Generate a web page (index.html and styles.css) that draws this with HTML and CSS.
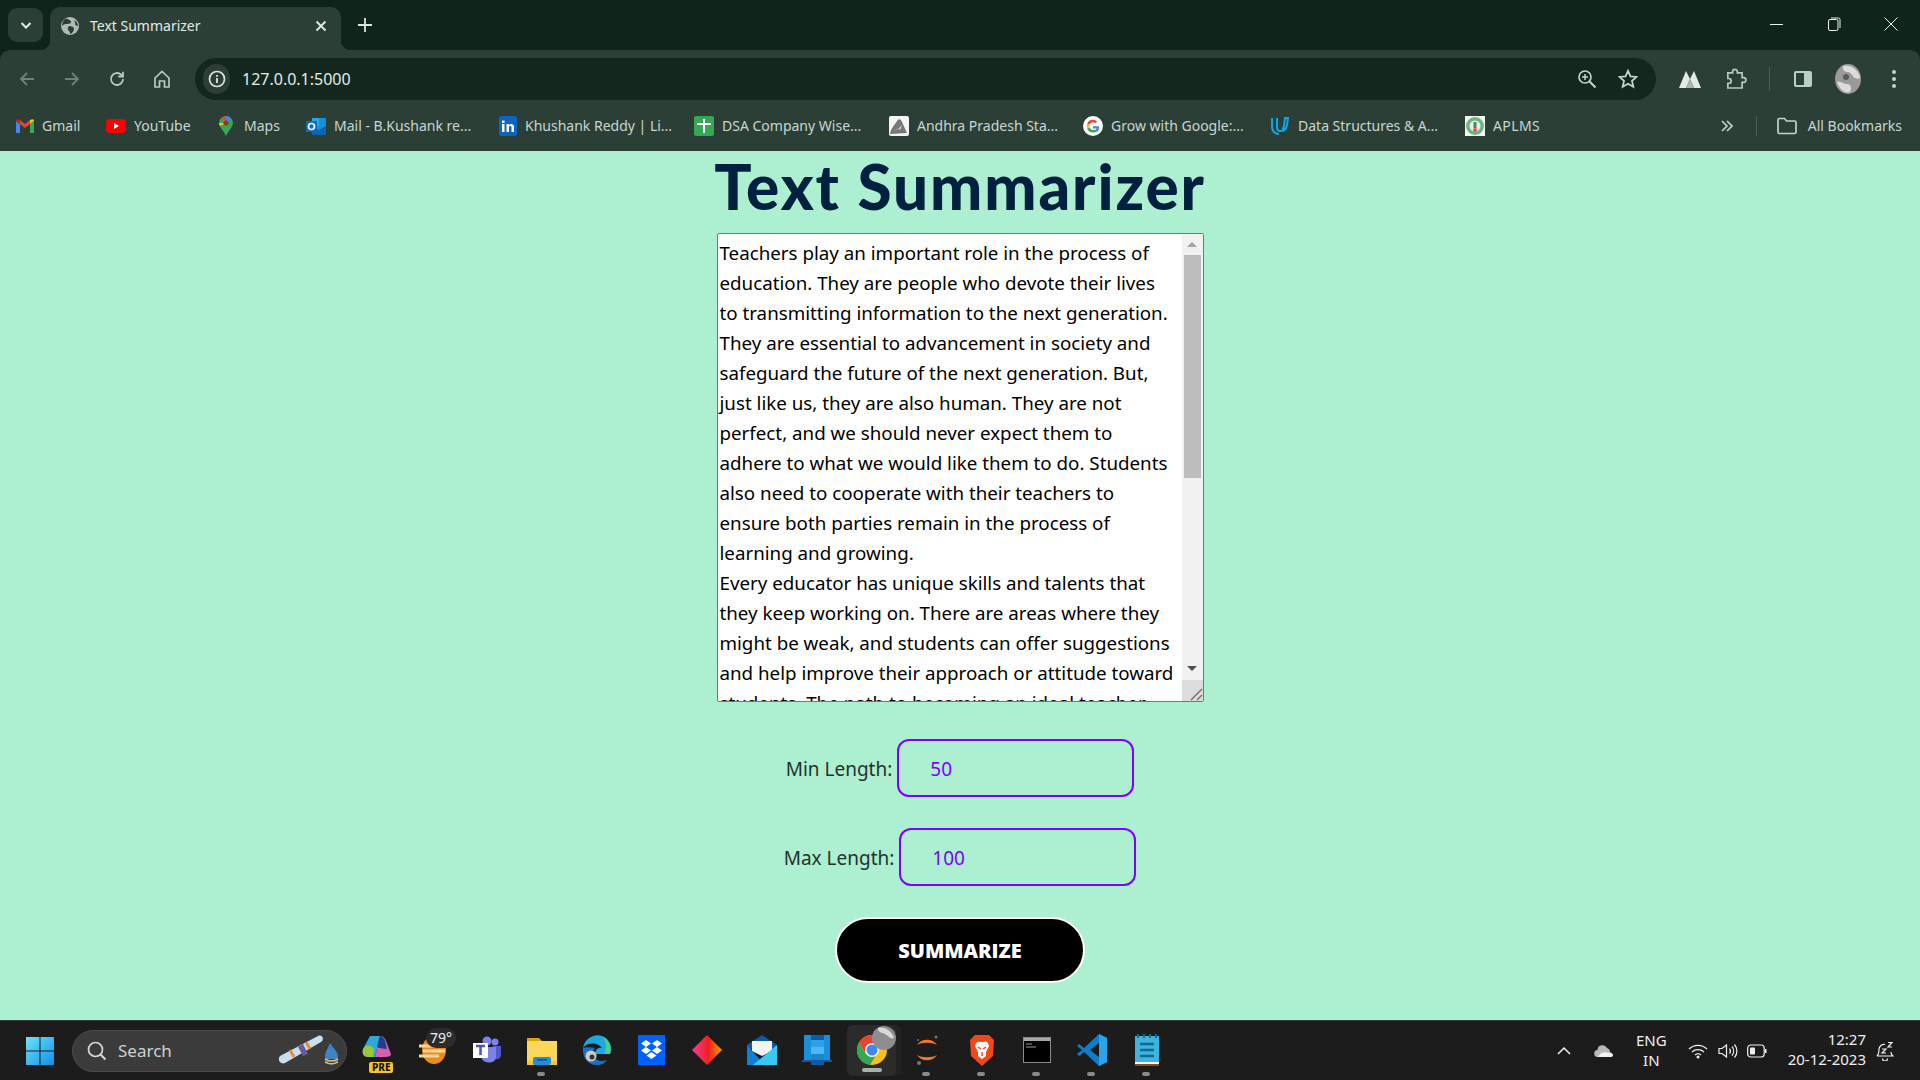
FILE: index.html
```html
<!DOCTYPE html>
<html lang="en">
<head>
  <meta charset="UTF-8" />
  <title>Text Summarizer</title>
  <link rel="stylesheet" href="styles.css">
</head>
<body>
  <div class="screen">

    <!-- tab strip -->
    <div class="tabstrip">
      <div class="tabsearch">
        <svg width="14" height="14" viewBox="0 0 14 14"><path d="M2.5 5l4.5 4.5L11.5 5" fill="none" stroke="#e4ebe7" stroke-width="2"/></svg>
      </div>
      <div class="tab">
        <svg class="tab-globe" width="18" height="18" viewBox="0 0 18 18"><circle cx="9" cy="9" r="9" fill="#aebcb5"/><path d="M5 1.5c2 1 4 1 5 3S7 7 5 7 1.500 8 1 9.500C1 5 3 2.500 5 1.500zM8 9c3 0 5 1 5 3s-2 4-3 5c-1 0-1-2-2-3s-2-3 0-5zM13 3c2 1 4 3 4 6-2 0-3-1-3-3s-1-2-1-3z" fill="#2c3f37"/></svg>
        <span class="tab-title">Text Summarizer</span>
        <svg class="tab-close" width="12" height="12" viewBox="0 0 12 12"><path d="M1.500 1.500l9 9M10.500 1.500l-9 9" stroke="#e4ebe7" stroke-width="1.800"/></svg>
      </div>
      <svg class="newtab" width="14" height="14" viewBox="0 0 14 14"><path d="M7 0v14M0 7h14" stroke="#dfe6e2" stroke-width="1.800"/></svg>
      <div class="winbtns">
        <svg width="14" height="14" viewBox="0 0 14 14"><path d="M0 7.500h13" stroke="#f0f0f0"/></svg>
        <svg width="14" height="14" viewBox="0 0 14 14"><rect x="1.500" y="2.500" width="9.500" height="11" rx="1.500" fill="none" stroke="#f0f0f0"/><path d="M4 1h7.500a1.500 1.500 0 0 1 1.500 1.500V11" fill="none" stroke="#f0f0f0"/></svg>
        <svg width="14" height="14" viewBox="0 0 14 14"><path d="M.5.5l13 13M13.500.5l-13 13" stroke="#f0f0f0"/></svg>
      </div>
    </div>

    <!-- toolbar -->
    <div class="toolbar">
      <div class="navbtns">
        <svg width="18" height="18" viewBox="0 0 18 18"><path d="M16 9H3M9 3L3 9l6 6" fill="none" stroke="#6f817a" stroke-width="1.800"/></svg>
        <svg width="18" height="18" viewBox="0 0 18 18"><path d="M2 9h13M9 3l6 6-6 6" fill="none" stroke="#6f817a" stroke-width="1.800"/></svg>
        <svg width="18" height="18" viewBox="0 0 18 18"><path d="M15 9a6 6 0 1 1-1.800-4.300L15 6.500M15 1.800v4.700h-4.700" fill="none" stroke="#b9c8c1" stroke-width="1.800"/></svg>
        <svg width="18" height="18" viewBox="0 0 18 18"><path d="M2 8l7-6.500L16 8v9h-4.500v-6h-5v6H2z" fill="none" stroke="#b9c8c1" stroke-width="1.700"/></svg>
      </div>
      <div class="omnibox">
        <div class="site-chip">
          <svg width="18" height="18" viewBox="0 0 18 18"><circle cx="9" cy="9" r="7.500" fill="none" stroke="#dfe6e2" stroke-width="1.700"/><path d="M9 8v5M9 5v1.800" stroke="#dfe6e2" stroke-width="1.800"/></svg>
        </div>
        <span class="url">127.0.0.1:5000</span>
        <div class="omni-icons">
          <svg width="20" height="20" viewBox="0 0 20 20"><circle cx="8" cy="8" r="6" fill="none" stroke="#c4d2cb" stroke-width="1.700"/><path d="M12.500 12.500L18.500 18.500" stroke="#c4d2cb" stroke-width="1.900"/><path d="M8 5v6M5 8h6" stroke="#c4d2cb" stroke-width="1.500"/></svg>
          <svg width="20" height="20" viewBox="0 0 20 20"><path d="M10 1.800l2.500 5.500 6 .6-4.500 4 1.300 5.900L10 14.800l-5.300 3 1.300-5.900-4.500-4 6-.6z" fill="none" stroke="#c4d2cb" stroke-width="1.800"/></svg>
        </div>
      </div>
      <div class="ext-icons">
        <svg class="ext-drive" width="22" height="20" viewBox="0 0 22 20"><path d="M0 19L7 2l4 8-4 9z" fill="#e4e9e6"/><path d="M22 19L15 2l-4 8 4 9z" fill="#e4e9e6"/><path d="M7 19l4-9 4 9z" fill="#aab6b0"/></svg>
        <svg class="ext-puzzle" width="22" height="22" viewBox="0 0 22 22"><path d="M3 4h5V3a2.500 2.500 0 0 1 5 0v1h5v5h1.500a2.500 2.500 0 0 1 0 5H18v6H3v-5h1a2.500 2.500 0 0 0 0-5H3z" fill="none" stroke="#b9c8c1" stroke-width="1.800" transform="translate(0 1) scale(.95)"/></svg>
        <span class="ext-sep"></span>
        <svg class="ext-panel" width="20" height="20" viewBox="0 0 20 20"><rect x="1" y="2" width="18" height="16" rx="2" fill="#b9d0c6"/><rect x="3" y="4" width="8" height="12" fill="#2c3f37"/></svg>
        <svg class="ext-avatar" width="26" height="30" viewBox="0 0 26 30"><ellipse cx="13" cy="15" rx="13" ry="15" fill="#9a9a9a"/><path d="M8 2c5-2 14 2 17 10 0 4-3 3-5 2s-4-6-7-6-6-2-5-6zM2 18c3-2 6 2 10 2s5 4 3 8c-6 2-11-4-13-10z" fill="#dcdcdc"/><circle cx="11" cy="13" r="3" fill="#5c5c5c"/></svg>
        <svg class="ext-dots" width="6" height="20" viewBox="0 0 6 20"><circle cx="3" cy="3" r="2" fill="#c4d2cb"/><circle cx="3" cy="10" r="2" fill="#c4d2cb"/><circle cx="3" cy="17" r="2" fill="#c4d2cb"/></svg>
      </div>
    </div>

    <!-- bookmarks bar -->
    <div class="bookmarks">
      <a class="bm bm-gmail"><svg width="18" height="14" viewBox="0 0 18 14"><path d="M0 2v12h4V5z" fill="#4285f4"/><path d="M18 2v12h-4V5z" fill="#34a853"/><path d="M4 5l5 4 5-4V1l-5 4-5-4z" fill="#ea4335"/><path d="M0 2l4 3V1C2 0 0 0 0 2z" fill="#c5221f"/><path d="M18 2l-4 3V1c2-1 4-1 4 1z" fill="#fbbc04"/></svg>Gmail</a>
      <a class="bm bm-yt"><svg width="20" height="14" viewBox="0 0 20 14"><rect width="20" height="14" rx="4" fill="#f00"/><path d="M8 4l5 3-5 3z" fill="#fff"/></svg>YouTube</a>
      <a class="bm bm-maps"><svg width="14" height="20" viewBox="0 0 14 20"><path d="M7 0a7 7 0 0 1 7 7c0 4-5 8-7 13-2-5-7-9-7-13a7 7 0 0 1 7-7z" fill="#34a853"/><path d="M2 2.500A7 7 0 0 1 7 0v7z" fill="#ea4335"/><path d="M7 0a7 7 0 0 1 5 2.500L7 7z" fill="#4285f4"/><path d="M0 7c0 1 .3 2 1 3l6-3z" fill="#fbbc04"/><circle cx="7" cy="7" r="2.500" fill="#8f3a1f"/></svg>Maps</a>
      <a class="bm bm-mail"><svg width="20" height="20" viewBox="0 0 20 20"><rect x="6" y="2" width="14" height="16" fill="#1490df"/><rect x="6" y="2" width="7" height="8" fill="#28a8ea"/><path d="M6 11l7 3 7-4v9H6z" fill="#0a64b4"/><rect y="5" width="11" height="11" fill="#0f6cbd"/><circle cx="5.500" cy="10.500" r="3" fill="none" stroke="#fff" stroke-width="1.600"/></svg>Mail - B.Kushank re...</a>
      <a class="bm bm-li"><svg width="18" height="20" viewBox="0 0 18 20"><rect width="18" height="20" rx="2" y="0" fill="#0a66c2"/><path d="M3 8h2.500v8H3zM3 4.500h2.500V7H3zM7.500 8H10v1.200c1.500-2 5-1.700 5 2V16h-2.500v-4.500c0-2-2.500-1.800-2.500 0V16H7.500z" fill="#fff"/></svg>Khushank Reddy | Li...</a>
      <a class="bm bm-dsa"><svg width="20" height="20" viewBox="0 0 20 20"><rect width="20" height="20" rx="2" fill="#34a853"/><path d="M10 3v14M3 8h14" stroke="#fff" stroke-width="2"/></svg>DSA Company Wise...</a>
      <a class="bm bm-ap"><svg width="20" height="20" viewBox="0 0 20 20"><rect width="20" height="20" rx="2" fill="#f4f4f4"/><path d="M1 18c1-6 4-8 7-13 2-3 4-2 5 1l5 11z" fill="#777"/><path d="M5 15c3-1 6-3 8-6l-2 5-1-2z" fill="#f4f4f4"/></svg>Andhra Pradesh Sta...</a>
      <a class="bm bm-g"><svg width="20" height="20" viewBox="0 0 20 20"><circle cx="10" cy="10" r="10" fill="#fff"/><path d="M16 10.200H10v2.200h3.600a3.800 3.800 0 0 1-1.400 2l2 1.600a6.300 6.300 0 0 0 1.800-5.800z" fill="#4285f4"/><path d="M10 16.500a6.200 6.200 0 0 0 4.200-1.500l-2-1.600A3.800 3.800 0 0 1 6.400 11.300L4.300 12.900A6.400 6.400 0 0 0 10 16.500z" fill="#34a853"/><path d="M6.400 11.300a3.800 3.800 0 0 1 0-2.500L4.300 7.200a6.400 6.400 0 0 0 0 5.700z" fill="#fbbc04"/><path d="M10 6.200a3.500 3.500 0 0 1 2.400 1l1.800-1.800A6.300 6.300 0 0 0 4.300 7.200l2.100 1.600A3.800 3.800 0 0 1 10 6.200z" fill="#ea4335"/></svg>Grow with Google:...</a>
      <a class="bm bm-ds"><svg width="20" height="20" viewBox="0 0 20 20"><path d="M2 2v9c0 4 3 7 7 7M7 2v9c0 2 1 4 3 4 4 0 6-1 7-6l1-7h-3l-1 8c-.3 2-1 3-2 3" fill="none" stroke="#12a5e0" stroke-width="2"/></svg>Data Structures &amp; A...</a>
      <a class="bm bm-aplms"><svg width="20" height="20" viewBox="0 0 20 20"><rect width="20" height="20" fill="#f4f6f4"/><circle cx="10" cy="10" r="9" fill="#6db383"/><circle cx="10" cy="10" r="5.500" fill="#e8efe4"/><path d="M10 6v6" stroke="#3d8b5a" stroke-width="3"/><circle cx="10" cy="14" r="2" fill="#e1554f"/></svg>APLMS</a>
      <div class="bm-right">
        <svg width="12" height="12" viewBox="0 0 12 12"><path d="M1 1l5 5-5 5M6 1l5 5-5 5" fill="none" stroke="#c4d2cb" stroke-width="1.700"/></svg>
        <span class="bm-sep"></span>
        <a class="bm bm-all"><svg width="20" height="18" viewBox="0 0 20 18"><path d="M1 3a1.500 1.500 0 0 1 1.500-1.500h5l2 2.500h8A1.500 1.500 0 0 1 19 5.500V15a1.500 1.500 0 0 1-1.500 1.500h-15A1.500 1.500 0 0 1 1 15z" fill="none" stroke="#c4d2cb" stroke-width="1.700"/></svg>All Bookmarks</a>
      </div>
    </div>

    <!-- the page itself -->
    <main class="page">
      <h1>Text Summarizer</h1>

      <div class="textbox">
        <div class="textbox-text">
          <div>Teachers play an important role in the process of</div>
          <div>education. They are people who devote their lives</div>
          <div>to transmitting information to the next generation.</div>
          <div>They are essential to advancement in society and</div>
          <div>safeguard the future of the next generation. But,</div>
          <div>just like us, they are also human. They are not</div>
          <div>perfect, and we should never expect them to</div>
          <div>adhere to what we would like them to do. Students</div>
          <div>also need to cooperate with their teachers to</div>
          <div>ensure both parties remain in the process of</div>
          <div>learning and growing.</div>
          <div>Every educator has unique skills and talents that</div>
          <div>they keep working on. There are areas where they</div>
          <div>might be weak, and students can offer suggestions</div>
          <div>and help improve their approach or attitude toward</div>
          <div>students. The path to becoming an ideal teacher</div>
        </div>
        <div class="scrollbar">
          <div class="scroll-arrow arrow-box-up"><span class="arrow-up"></span></div>
          <div class="scroll-track"><div class="scroll-thumb"></div></div>
          <div class="scroll-arrow arrow-box-down"><span class="arrow-down"></span></div>
          <div class="resizer">
            <svg width="14" height="14" viewBox="0 0 14 14"><path d="M2 13L13 2M8 13l5-5" stroke="#666" stroke-width="1.200"/></svg>
          </div>
        </div>
      </div>

      <div class="field field-min">
        <label for="minLength">Min Length:</label>
        <input id="minLength" type="text" value="50" />
      </div>
      <div class="field field-max">
        <label for="maxLength">Max Length:</label>
        <input id="maxLength" type="text" value="100" />
      </div>

      <button class="summarize" type="button">SUMMARIZE</button>
    </main>

    <!-- windows taskbar -->
    <footer class="taskbar">
      <div class="tb-start">
        <svg width="30" height="30" viewBox="0 0 30 30"><defs><linearGradient id="winGrad" x1="0" y1="0" x2="1" y2="1"><stop offset="0" stop-color="#6fe3fb"/><stop offset="1" stop-color="#0f8fe9"/></linearGradient></defs><path d="M1 1h13.500v13.500H1zM15.500 1H29v13.500H15.500zM1 15.500h13.500V29H1zM15.500 15.500H29V29H15.500z" fill="url(#winGrad)"/></svg>
      </div>
      <div class="tb-search">
        <svg width="20" height="20" viewBox="0 0 20 20"><circle cx="8.500" cy="8.500" r="7" fill="none" stroke="#d8d8d8" stroke-width="1.700"/><path d="M13.500 13.500l5 5" stroke="#d8d8d8" stroke-width="1.900"/></svg>
        <span>Search</span>
        <svg class="tb-search-art" width="62" height="36" viewBox="0 0 62 36"><path d="M2 23L40 3c4-2 7 3 3 6L7 30c-5 2-8-4-5-7z" fill="#c8dff0"/><path d="M12 17l4 7M28 9l4 7" stroke="#e98a3a" stroke-width="3"/><path d="M20 14l5 9 5-2-5-10z" fill="#6d5a94"/><path d="M47 24c0-6 3-8 5-14 3 5 8 8 8 14v4c-3 5-11 5-13 0z" fill="#3d83c9"/><path d="M47 26c4 2 9 2 13 0M47 29c4 2 9 2 13 0" stroke="#e8b95f" stroke-width="1.500"/></svg>
      </div>
      <div class="tb-apps">
        <div class="tb-item">
          <svg width="30" height="32" viewBox="0 0 30 32"><path d="M8 2h10l-5 21H6C1 23 0 19 1 15z" fill="#2fa9d9"/><path d="M3 12c4-1 8 0 9 3l-1 8H6c-5 0-6-4-5-8z" fill="#95c93d"/><path d="M18 2c3 0 5 2 6 5l5 13c0 2-2 3-6 3H13z" fill="#d75fb0"/><path d="M18 2l-3 10c2 3 6 4 10 3l-2-8c-1-3-3-5-5-5z" fill="#1d3f8f"/><path d="M17 14l7 1 3 5-12 2z" fill="#d75fb0"/></svg>
          <span class="badge-pre">PRE</span>
        </div>
        <div class="tb-item">
          <svg width="30" height="30" viewBox="0 0 30 30"><ellipse cx="17" cy="15" rx="12" ry="14" fill="#ea8c1c"/><path d="M12 3c3-2 7-2 10 0z" fill="#fbe5a5"/><path d="M2 11h24M6 16h22M2 21h20" stroke="#f7d79a" stroke-width="3"/></svg>
          <span class="badge-temp">79°</span>
        </div>
        <div class="tb-item">
          <svg width="30" height="30" viewBox="0 0 30 30"><circle cx="23" cy="7" r="3.500" fill="#7b83eb"/><circle cx="15" cy="6" r="4.500" fill="#7b83eb"/><path d="M21 11h8v9c0 3-3 5-6 4z" fill="#5059c9"/><path d="M9 12h15v10c0 7-12 7-14 2z" fill="#7b83eb"/><rect x="1" y="8" width="15" height="15" fill="#fff"/><path d="M4 11h9M8.500 11v9" stroke="#4b53bc" stroke-width="2.500"/></svg>
        </div>
        <div class="tb-item tb-running">
          <svg width="30" height="30" viewBox="0 0 30 30"><path d="M0 3h12l3 3h15v22H0z" fill="#d9a50f"/><rect y="6" width="30" height="24" fill="#fbd75c"/><path d="M0 26h30v4H0z" fill="#f2c53e"/><rect x="6" y="22" width="18" height="8" rx="2" fill="#1f8fd8"/><rect x="10" y="24" width="10" height="1.500" fill="#0c4f82"/></svg>
        </div>
        <div class="tb-item">
          <svg width="30" height="32" viewBox="0 0 30 32"><path d="M1 14C3 3 16-3 25 5c5 5 5 12 3 15H13c0-5 4-7 7-6-3-5-14-7-19 0z" fill="#1fa8e0"/><path d="M20 3c6 2 10 8 8 17h-6c4-6 2-14-2-17z" fill="#52cf7c"/><path d="M1 14c-1 9 5 17 13 17 6 0 9-2 11-5-5 2-10 1-13-3-2-3-1-7 1-9-4-1-9-1-12 0z" fill="#1670c4"/><circle cx="9" cy="22" r="5.500" fill="#ccc"/><circle cx="10" cy="23" r="2.500" fill="#333"/></svg>
        </div>
        <div class="tb-item">
          <svg width="27" height="30" viewBox="0 0 27 30"><rect width="27" height="30" fill="#0061fe"/><path d="M8 5l5 3.500-5 3.500-5-3.500zM19 5l5 3.500-5 3.500-5-3.500zM8 12l5 3.500-5 3.500-5-3.500zM19 12l5 3.500-5 3.500-5-3.500zM13.500 17l5 3.500-5 3.500-5-3.500z" fill="#fff"/></svg>
        </div>
        <div class="tb-item">
          <svg width="30" height="30" viewBox="0 0 30 30"><defs><linearGradient id="gemGrad" x1="0" y1="0" x2="1" y2="0"><stop offset="0" stop-color="#f13fa2"/><stop offset=".55" stop-color="#f1201f"/><stop offset="1" stop-color="#f5a000"/></linearGradient></defs><path d="M15 0l15 15-15 15L0 15z" fill="url(#gemGrad)"/></svg>
        </div>
        <div class="tb-item">
          <svg width="30" height="30" viewBox="0 0 30 30"><path d="M0 10L15 0l15 10v4H0z" fill="#0d5ba6"/><path d="M5 6h20v10l-10 5-10-5z" fill="#f4f4f4"/><path d="M0 10v20h18z" fill="#1180d4"/><path d="M30 10v20H6z" fill="#38c8f5"/></svg>
        </div>
        <div class="tb-item">
          <svg width="30" height="32" viewBox="0 0 30 32"><rect x="2" y="1" width="26" height="26" fill="#1c8fdb"/><rect x="0" y="26" width="30" height="2" fill="#125c96"/><rect x="9" y="1" width="13" height="30" rx="1" fill="#0d5ba6"/><rect x="9" y="6" width="13" height="7" fill="#2b9fe8"/><rect x="9" y="13" width="13" height="7" fill="#48b9f2"/><rect x="9" y="20" width="13" height="6" fill="#1f84cf"/></svg>
        </div>
        <div class="tb-item tb-active">
          <svg width="30" height="30" viewBox="0 0 30 30"><circle cx="15" cy="15" r="15" fill="#fbc116"/><path d="M15 0A15 15 0 0 0 2 7.500L8 18l7-8h13.500A15 15 0 0 0 15 0z" fill="#ea4335"/><path d="M2 7.500A15 15 0 0 0 13 30l6-10-11-2z" fill="#34a853"/><circle cx="15" cy="15" r="7" fill="#fff"/><circle cx="15" cy="15" r="5.500" fill="#4285f4"/></svg>
          <svg class="tb-avatar" width="24" height="24" viewBox="0 0 24 24"><circle cx="12" cy="12" r="12" fill="#8d8d8d"/><path d="M6 2c6-2 14 3 16 10-3 2-7-3-9-4S5 6 6 2z" fill="#d9d9d9"/></svg>
        </div>
        <div class="tb-item tb-running">
          <svg width="30" height="36" viewBox="0 0 30 36"><path d="M5 13c4-7 16-7 20 0-5-3-15-3-20 0zM5 23c4 7 16 7 20 0-5 3-15 3-20 0z" fill="#f37726"/><circle cx="24" cy="5" r="1.500" fill="#777"/><circle cx="6" cy="8" r="1" fill="#777"/><circle cx="7" cy="31" r="2" fill="#777"/></svg>
        </div>
        <div class="tb-item tb-running">
          <svg width="26" height="32" viewBox="0 0 26 32"><path d="M6 1h14l5 5-1 16-11 10L2 22 1 6z" fill="#f1471d"/><path d="M7 9c2-2 4-1 6-1s4-1 6 1l1 3-3 6v4l-4 3-4-3v-4l-3-6z" fill="#fff"/><path d="M9 13l3 2M17 13l-3 2M13 18v4" stroke="#f1471d" stroke-width="1.500"/></svg>
        </div>
        <div class="tb-item tb-running">
          <svg width="28" height="26" viewBox="0 0 28 26"><rect width="28" height="26" fill="#8a8a8a"/><rect x="1" y="1" width="26" height="24" fill="#000"/><rect x="1" y="1" width="26" height="3" fill="#a9a9a9"/><path d="M3 7h6M3 10h10" stroke="#999"/></svg>
        </div>
        <div class="tb-item tb-running">
          <svg width="30" height="32" viewBox="0 0 30 32"><path d="M22 0l8 4v24l-8 4L7 18l-5 4-2-2 5-4-5-4 2-2 5 4z" fill="#0a7ecb"/><path d="M22 0l8 4v24l-8 4z" fill="#2aa5ec"/><path d="M22 9v14l-9-7z" fill="#1c1c1c"/></svg>
        </div>
        <div class="tb-item tb-running">
          <svg width="24" height="32" viewBox="0 0 24 32"><rect y="2" width="24" height="28" fill="#3fb2dd"/><path d="M3 0v4M9 0v4M15 0v4M21 0v4" stroke="#0e6c93" stroke-width="2"/><path d="M5 10h14M5 16h14M5 22h14" stroke="#0e6c93" stroke-width="2.500"/><rect y="28" width="24" height="2.500" fill="#f5f5f5"/><rect y="30" width="24" height="2" fill="#8d4a21"/></svg>
        </div>
      </div>
      <div class="tb-tray">
        <svg class="tray-chevron" width="14" height="10" viewBox="0 0 14 10"><path d="M1 8l6-6 6 6" fill="none" stroke="#f0f0f0" stroke-width="1.500"/></svg>
        <svg class="tray-cloud" width="20" height="14" viewBox="0 0 20 14"><path d="M4 13a3.500 3.500 0 0 1-.5-7A5 5 0 0 1 13 4a4.500 4.500 0 0 1 3 4.200A2.500 2.500 0 0 1 17 13z" fill="#b8b8b8"/><path d="M4 13c1-3 6-6 10-4 2-1 5 1 5 2 0 1-1 2-2 2z" fill="#f2f2f2"/></svg>
        <div class="tray-lang">ENG<br>IN</div>
        <svg class="tray-wifi" width="20" height="16" viewBox="0 0 20 16"><path d="M1 6a13 13 0 0 1 18 0M4 9a9 9 0 0 1 12 0M7 12a4.500 4.500 0 0 1 6 0" fill="none" stroke="#f0f0f0" stroke-width="1.300"/><circle cx="10" cy="14" r="1.500" fill="#f0f0f0"/></svg>
        <svg class="tray-vol" width="20" height="16" viewBox="0 0 20 16"><path d="M1 5.500h3L8.500 2v12L4 10.500H1z" fill="none" stroke="#f0f0f0" stroke-width="1.200"/><path d="M11.500 5.500a4 4 0 0 1 0 5M14 3.500a7 7 0 0 1 0 9M16.500 1.500a10 10 0 0 1 0 13" fill="none" stroke="#f0f0f0" stroke-width="1.200"/></svg>
        <svg class="tray-batt" width="20" height="14" viewBox="0 0 20 14"><rect x=".7" y="1" width="16.500" height="12" rx="3" fill="none" stroke="#f0f0f0" stroke-width="1.200"/><rect x="3" y="3.500" width="5" height="7" rx="1" fill="#f0f0f0"/><rect x="18" y="5" width="1.500" height="4" fill="#f0f0f0"/></svg>
        <div class="tray-clock">12:27<br>20-12-2023</div>
        <svg class="tray-bell" width="18" height="20" viewBox="0 0 18 20"><path d="M1 15c2-2 2-4 2-7a5 5 0 0 1 6-4.500M15 11c0 2 .5 3 2 4H1M6.500 17.500a2.500 2.500 0 0 0 5 0" fill="none" stroke="#f0f0f0" stroke-width="1.200"/><path d="M6 8h4l-4 4h4M12 1.500h4l-4 4.500h4" fill="none" stroke="#f0f0f0" stroke-width="1.200"/></svg>
      </div>
    </footer>
  </div>
</body>
</html>
```

FILE: styles.css
```css
* {
  margin: 0; padding: 0; box-sizing: border-box;
}

body {
  width: 1920px;
  height: 1080px;
  overflow: hidden;
  font-family: "Noto Sans", "Open Sans", sans-serif;
}

.screen {
  display: flex;
  flex-direction: column;
  height: 1080px;
  background: #0f241b;
}

/* tab strip */
.tabstrip {
  height: 50px;
  display: flex;
  align-items: flex-start;
  padding-left: 8px;
  flex-shrink: 0;
}

.tabsearch {
  width: 35px;
  height: 34px;
  margin-top: 8px;
  border-radius: 9px;
  background: #2c3f37;
  display: flex;
  align-items: center;
  justify-content: center;
}

.tab {
  position: relative;
  width: 291px;
  height: 43px;
  margin-top: 7px;
  margin-left: 7px;
  border-radius: 10px 10px 0 0;
  background: #2c3f37;
  display: flex;
  align-items: center;
  padding: 0 14px 6px 11px;
  color: #e4ebe7;
  font-size: 14px;
}

.tab::before, .tab::after {
  content: "";
  position: absolute;
  bottom: 0;
  width: 10px;
  height: 10px;
}

.tab::before {
  left: -10px;
  background: radial-gradient(circle at 0 0, transparent 10px, #2c3f37 10.5px);
}

.tab::after {
  right: -10px;
  background: radial-gradient(circle at 100% 0, transparent 10px, #2c3f37 10.5px);
}

.tab-title {
  margin-left: 11px;
  flex: 1;
}

.newtab {
  margin-left: 17px;
  margin-top: 18px;
}

.winbtns {
  margin-left: auto;
  display: flex;
  gap: 43px;
  padding: 17px 22px 0 0;
}

/* toolbar */
.toolbar {
  height: 50px;
  background: #2c3f37;
  border-radius: 10px 10px 0 0;
  display: flex;
  align-items: flex-end;
  flex-shrink: 0;
}

.navbtns {
  width: 195px;
  height: 42px;
  display: flex;
  align-items: center;
  gap: 27px;
  padding-left: 18px;
}

.omnibox {
  width: 1461px;
  height: 42px;
  border-radius: 21px;
  background: #14271f;
  display: flex;
  align-items: center;
  padding-left: 8px;
}

.site-chip {
  width: 27px;
  height: 30px;
  border-radius: 15px;
  background: #2c3f37;
  display: flex;
  align-items: center;
  justify-content: center;
}

.url {
  margin-left: 12px;
  color: #e4ebe7;
  font-size: 16px;
}

.omni-icons {
  margin-left: auto;
  display: flex;
  gap: 21px;
  padding-right: 18px;
}

.ext-icons {
  flex: 1;
  height: 42px;
  display: flex;
  align-items: center;
  padding-left: 23px;
}

.ext-puzzle { margin-left: 24px; }
.ext-panel { margin-left: 23px; }
.ext-avatar { margin-left: 22px; }
.ext-dots { margin-left: 30px; }

.ext-sep {
  width: 1px;
  height: 24px;
  margin-left: 22px;
  background: #4a5d55;
}

/* bookmarks */
.bookmarks {
  height: 51px;
  background: #2c3f37;
  display: flex;
  align-items: center;
  padding-left: 16px;
  color: #c9d6d0;
  font-size: 14px;
  flex-shrink: 0;
}

.bm {
  display: flex;
  align-items: center;
  gap: 8px;
  white-space: nowrap;
}

.bm svg { flex-shrink: 0; }

.bm-gmail { width: 90px; }
.bm-yt { width: 113px; }
.bm-maps { width: 87px; gap: 11px; }
.bm-mail { width: 193px; }
.bm-li { width: 195px; }
.bm-dsa { width: 195px; }
.bm-ap { width: 194px; }
.bm-g { width: 187px; }
.bm-ds { width: 195px; }
.bm-aplms { width: 90px; letter-spacing: 0.4px; }
.bm-all { gap: 11px; }

.bm-right {
  margin-left: auto;
  display: flex;
  align-items: center;
  padding-right: 18px;
}

.bm-sep {
  width: 1px;
  height: 20px;
  margin: 0 20px 0 23px;
  background: #4a5d55;
}

/* page */
.page {
  flex: 1;
  background: #adefd1;
  display: flex;
  flex-direction: column;
  align-items: center;
}

h1 {
  color: #00203f;
  font-family: "Lato", sans-serif;
  font-weight: 900;
  font-size: 62px;
  letter-spacing: 1.9px;
  line-height: 72px;
  margin-top: -1px;
}

.textbox {
  width: 487px;
  height: 469px;
  margin-top: 11px;
  border: 1px solid #767676;
  border-radius: 2px;
  background: #fff;
  display: flex;
  overflow: hidden;
  flex-shrink: 0;
}

.textbox-text {
  flex: 1;
  padding: 4px 0 0 2px;
  color: #000;
  font-size: 18.75px;
  line-height: 30px;
  white-space: nowrap;
  overflow: hidden;
}

.scrollbar {
  width: 21px;
  display: flex;
  flex-direction: column;
  background: #f1f1f1;
}

.scroll-arrow {
  display: flex;
  align-items: center;
  justify-content: center;
}

.arrow-box-up { height: 21px; }
.arrow-box-down { height: 24px; }

.arrow-up, .arrow-down {
  width: 0;
  height: 0;
  border-left: 5px solid transparent;
  border-right: 5px solid transparent;
}

.arrow-up { border-bottom: 5px solid #a3a3a3; }
.arrow-down { border-top: 5px solid #505050; }

.scroll-track {
  flex: 1;
  padding: 0 2px;
}

.scroll-thumb {
  height: 223px;
  background: #bdbdbd;
}

.resizer {
  height: 21px;
  background: #dcdcdc;
  display: flex;
  align-items: flex-end;
  justify-content: flex-end;
}

.field {
  display: flex;
  align-items: center;
  gap: 5px;
  font-size: 19px;
  color: #22332c;
}

.field label { padding-top: 2px; }

.field-min { margin-top: 37px; }
.field-max { margin-top: 31px; }

.field input {
  width: 237px;
  height: 58px;
  border: 2.5px solid #8000ff;
  border-radius: 12px;
  background: transparent;
  color: #8000ff;
  padding: 2px 0 0 31px;
  font-family: inherit;
  font-size: 19px;
}

.summarize {
  width: 250px;
  height: 66px;
  margin-top: 31px;
  border: 2px solid #fff;
  border-radius: 33px;
  background: #000;
  color: #fff;
  font-family: "Open Sans", sans-serif;
  font-weight: 800;
  font-size: 20px;
}

/* taskbar */
.taskbar {
  position: relative;
  height: 60px;
  background: #1c1c1c;
  border-top: 1px solid #3a3a3a;
  display: flex;
  align-items: center;
  color: #f0f0f0;
  flex-shrink: 0;
}

.tb-start {
  width: 72px;
  padding-left: 25px;
  display: flex;
}

.tb-search {
  width: 275px;
  height: 42px;
  border-radius: 21px;
  background: #3b3b3b;
  border: 1px solid #4b4b4b;
  display: flex;
  align-items: center;
  padding-left: 14px;
  color: #d0d0d0;
  font-size: 17px;
}

.tb-search span { margin-left: 11px; }
.tb-search-art { margin-left: auto; margin-right: 6px; }

.tb-apps {
  display: flex;
  margin-left: 2px;
}

.tb-item {
  position: relative;
  width: 55px;
  height: 59px;
  display: flex;
  align-items: center;
  justify-content: center;
  padding-bottom: 2px;
}

.tb-running::after, .tb-active::after {
  content: "";
  position: absolute;
  bottom: 4px;
  left: 23px;
  width: 8px;
  height: 4px;
  border-radius: 2px;
  background: #8a8a8a;
}

.tb-active {
  background: #2b2b2b;
  border-radius: 6px;
  box-shadow: 5px 0 0 #232323;
  margin: 4px 3px;
  height: 51px;
  width: 49px;
}

.tb-active::after {
  left: 15px;
  width: 20px;
  background: #a3b3ad;
}

/* overlay pieces on the app icons */
.tb-avatar {
  position: absolute;
  top: 1px;
  right: 0;
}

.badge-pre {
  position: absolute;
  left: 20px;
  bottom: 7px;
  padding: 0 3px;
  border-radius: 2px;
  background: #f7c52b;
  color: #111;
  font-size: 10px;
  font-weight: 800;
  line-height: 11px;
}

.badge-temp {
  position: absolute;
  left: 22px;
  top: 7px;
  padding: 0 4px;
  border-radius: 10px;
  background: #2c2c2c;
  color: #f0f0f0;
  font-size: 14px;
  line-height: 20px;
}

.tb-tray {
  margin-left: auto;
  display: flex;
  align-items: center;
  font-size: 15px;
  line-height: 20px;
  padding-right: 26px;
}

.tray-cloud { margin-left: 23px; }

.tray-lang {
  margin: 0 0 2px 22px;
  text-align: center;
}

.tray-wifi { margin-left: 21px; }
.tray-vol { margin-left: 10px; }
.tray-batt { margin-left: 9px; }

.tray-clock {
  margin: 0 0 3px 21px;
  text-align: right;
}

.tray-bell { margin-left: 10px; }
```
